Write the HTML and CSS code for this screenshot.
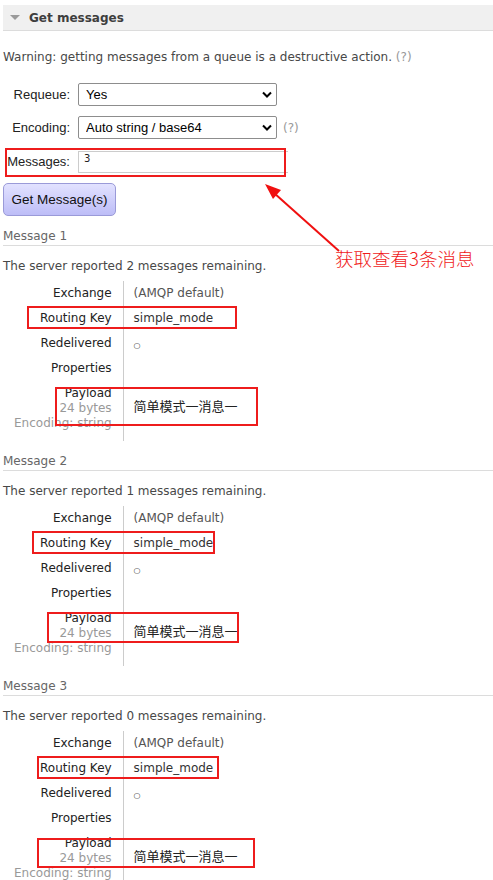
FILE: index.html
```html
<!DOCTYPE html>
<html lang="en">
<head>
<meta charset="utf-8">
<title>Get messages</title>
<link rel="stylesheet" href="styles.css">
</head>
<body>
<div class="page">
  <div class="section-head">
    <span class="tri"></span>
    <h2>Get messages</h2>
  </div>
  <p class="warn">Warning: getting messages from a queue is a destructive action. <span class="help">(?)</span></p>
  <form class="form">
    <div class="row">
      <label class="lbl">Requeue:</label>
      <div class="sel">
        <select><option>Yes</option><option>No</option></select>
        <svg class="chev" width="10" height="7" viewBox="0 0 10 7"><path d="M1 1.5 L5 5.5 L9 1.5" fill="none" stroke="#000" stroke-width="2"/></svg>
      </div>
    </div>
    <div class="row">
      <label class="lbl">Encoding:</label>
      <div class="sel">
        <select><option>Auto string / base64</option><option>base64</option></select>
        <svg class="chev" width="10" height="7" viewBox="0 0 10 7"><path d="M1 1.5 L5 5.5 L9 1.5" fill="none" stroke="#000" stroke-width="2"/></svg>
      </div>
      <span class="help q">(?)</span>
    </div>
    <div class="row">
      <label class="lbl">Messages:</label>
      <input class="num" type="text" value="3">
    </div>
    <button type="button" class="btn">Get Message(s)</button>
  </form>

  <section class="msg">
    <h3>Message 1</h3>
    <p class="remain">The server reported 2 messages remaining.</p>
    <table class="facts">
      <tr><th>Exchange</th><td>(AMQP default)</td></tr>
      <tr><th>Routing Key</th><td class="dark">simple_mode</td></tr>
      <tr><th>Redelivered</th><td><span class="dot">○</span></td></tr>
      <tr><th>Properties</th><td></td></tr>
      <tr class="payload"><th>Payload<br><span class="sub">24 bytes</span><br><span class="sub">Encoding: string</span></th><td><span class="cjk">简单模式一消息一</span></td></tr>
    </table>
  </section>

  <section class="msg">
    <h3>Message 2</h3>
    <p class="remain">The server reported 1 messages remaining.</p>
    <table class="facts">
      <tr><th>Exchange</th><td>(AMQP default)</td></tr>
      <tr><th>Routing Key</th><td class="dark">simple_mode</td></tr>
      <tr><th>Redelivered</th><td><span class="dot">○</span></td></tr>
      <tr><th>Properties</th><td></td></tr>
      <tr class="payload"><th>Payload<br><span class="sub">24 bytes</span><br><span class="sub">Encoding: string</span></th><td><span class="cjk">简单模式一消息一</span></td></tr>
    </table>
  </section>

  <section class="msg">
    <h3>Message 3</h3>
    <p class="remain">The server reported 0 messages remaining.</p>
    <table class="facts">
      <tr><th>Exchange</th><td>(AMQP default)</td></tr>
      <tr><th>Routing Key</th><td class="dark">simple_mode</td></tr>
      <tr><th>Redelivered</th><td><span class="dot">○</span></td></tr>
      <tr><th>Properties</th><td></td></tr>
      <tr class="payload"><th>Payload<br><span class="sub">24 bytes</span><br><span class="sub">Encoding: string</span></th><td><span class="cjk">简单模式一消息一</span></td></tr>
    </table>
  </section>

  <div class="mark box-msgs"></div>
  <div class="mark box-rk1"></div>
  <div class="mark box-pl1"></div>
  <div class="mark box-rk2"></div>
  <div class="mark box-pl2"></div>
  <div class="mark box-rk3"></div>
  <div class="mark box-pl3"></div>
  <svg class="arrow" width="493" height="300" viewBox="0 0 493 300">
    <line x1="339" y1="251" x2="274" y2="193" stroke="#f01010" stroke-width="2"/>
    <polygon points="265,184 281,190 273,199" fill="#f01010"/>
  </svg>
  <div class="note">获取查看3条消息</div>
</div>
</body>
</html>
```

FILE: styles.css
```css
html, body {
  margin: 0;
  padding: 0;
  background: #fff;
}
.page {
  position: relative;
  width: 493px;
  height: 880px;
  overflow: hidden;
  font-family: "DejaVu Sans", Verdana, sans-serif;
  font-size: 12px;
  color: #484848;
}
.section-head {
  margin: 5px 0 0 3px;
  height: 25px;
  background: #f0f0f0;
  border-bottom: 1px solid #dcdcdc;
  display: flex;
  align-items: center;
}
.tri {
  width: 0;
  height: 0;
  margin-left: 7px;
  border-left: 5px solid transparent;
  border-right: 5px solid transparent;
  border-top: 5px solid #9a9a9a;
}
.section-head h2 {
  margin: 0 0 0 9px;
  font-size: 12px;
  font-weight: bold;
  color: #3e3e3e;
}
.warn {
  margin: 19px 0 0 3px;
  line-height: 15px;
}
.help {
  color: #999;
}
.form {
  margin: 18px 0 0 0;
  font-family: "Liberation Sans", Arial, sans-serif;
  font-size: 13px;
  color: #222;
}
.row {
  display: flex;
  align-items: center;
  margin-bottom: 10px;
}
.lbl {
  width: 70px;
  text-align: right;
  margin-right: 8px;
}
.sel {
  position: relative;
  width: 199px;
  height: 23px;
}
.sel select {
  -webkit-appearance: none;
  appearance: none;
  box-sizing: border-box;
  width: 100%;
  height: 100%;
  border: 1px solid #8d8d8d;
  border-radius: 2px;
  background: #fff;
  padding: 0 0 0 7px;
  font-family: "Liberation Sans", Arial, sans-serif;
  font-size: 13px;
  color: #000;
}
.chev {
  position: absolute;
  right: 5px;
  top: 8px;
  pointer-events: none;
}
.q {
  margin-left: 6px;
  font-family: "DejaVu Sans", Verdana, sans-serif;
  font-size: 12px;
}
.num {
  box-sizing: border-box;
  width: 210px;
  height: 22px;
  margin-top: 2px;
  border: 1px solid #ccc;
  border-right: none;
  padding: 0 0 7px 5px;
  font-family: "DejaVu Sans", sans-serif;
  font-size: 10px;
  color: #222;
  outline: none;
}
.btn {
  display: block;
  margin: 3px 0 0 3px;
  width: 113px;
  height: 33px;
  border: 1px solid #9a9ad8;
  border-radius: 5px;
  background: linear-gradient(#e2e2ff, #bdbdf7);
  font-family: "Liberation Sans", Arial, sans-serif;
  font-size: 13.5px;
  color: #111;
  padding: 0;
}
.msg {
  margin: 0 0 0 3px;
}
.msg h3 {
  margin: 0;
  padding-top: 13px;
  padding-bottom: 1px;
  line-height: 15px;
  font-size: 12px;
  font-weight: normal;
  color: #666;
  border-bottom: 1px solid #dcdcdc;
}
.remain {
  margin: 13px 0 0 0;
  line-height: 15px;
}
.facts {
  margin: 7px 0 0 1px;
  border-collapse: collapse;
}
.facts th {
  text-align: right;
  font-weight: normal;
  color: #222;
  padding: 5px 11px 5px 10px;
  height: 15px;
  line-height: 15px;
  vertical-align: top;
  white-space: nowrap;
}
.facts td {
  border-left: 1px solid #ccc;
  padding: 5px 10px;
  height: 15px;
  line-height: 15px;
  min-width: 120px;
  color: #555;
  white-space: nowrap;
}
.facts td.dark {
  color: #333;
}
.facts .payload th {
  padding-bottom: 10px;
}
.facts .payload td {
  vertical-align: middle;
  padding-bottom: 14px;
}
.sub {
  color: #999;
}
.dot {
  font-size: 8px;
  line-height: 0;
  color: #333;
  vertical-align: -1px;
}
.cjk {
  font-family: "Noto Sans CJK SC", sans-serif;
  font-size: 13px;
  color: #222;
}
.mark {
  position: absolute;
  border: 2px solid #ee1c1c;
  box-sizing: border-box;
}
.box-msgs { left: 5px; top: 148px; width: 281px; height: 29px; }
.box-rk1 { left: 27px; top: 306px; width: 210px; height: 23px; }
.box-pl1 { left: 55px; top: 387px; width: 203px; height: 39px; }
.box-rk2 { left: 32px; top: 531px; width: 183px; height: 23px; }
.box-pl2 { left: 47px; top: 612px; width: 192px; height: 31px; }
.box-rk3 { left: 37px; top: 756px; width: 182px; height: 23px; }
.box-pl3 { left: 37px; top: 838px; width: 218px; height: 30px; }
.arrow {
  position: absolute;
  left: 0;
  top: 0;
}
.note {
  position: absolute;
  left: 335px;
  top: 246px;
  font-family: "Noto Sans CJK SC", sans-serif;
  font-size: 18.5px;
  line-height: 24px;
  color: #f01a1a;
  font-weight: 300;
}
```
